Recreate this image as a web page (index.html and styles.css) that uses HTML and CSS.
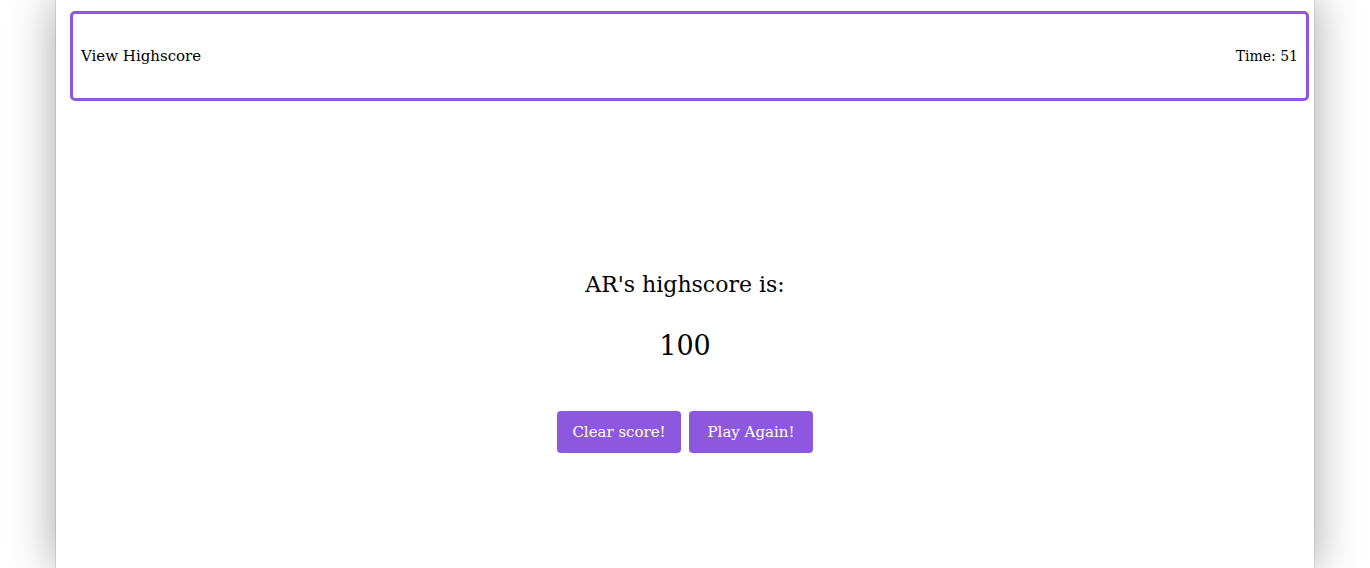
FILE: index.html
```html
<!DOCTYPE html>
<html>
<head>
<meta charset="utf-8">
<link rel="stylesheet" href="styles.css">
</head>
<body>
<div class="page">
  <header class="topbar">
    <span class="link">View Highscore</span>
    <span class="timer">Time: 51</span>
  </header>
  <main class="result">
    <h2 class="title">AR's highscore is:</h2>
    <div class="score">100</div>
    <div class="actions">
      <button class="btn">Clear score!</button>
      <button class="btn">Play Again!</button>
    </div>
  </main>
</div>
</body>
</html>
```
FILE: styles.css
```css
html, body {
  margin: 0;
  padding: 0;
  background: #ffffff;
  height: 100%;
}
body {
  font-family: "DejaVu Serif", "Liberation Serif", serif;
  color: #000;
  overflow: hidden;
}
.page {
  width: 1258px;
  margin: 0 auto;
  min-height: 100vh;
  background: #fff;
  box-sizing: border-box;
  padding-top: 11px;
  box-shadow: 0 0 1px 0 rgba(0,0,0,0.5), 0 0 42px 2px rgba(0,0,0,0.33);
  display: flex;
  flex-direction: column;
}
.topbar {
  height: 90px;
  margin: 0 5px 0 14px;
  box-sizing: border-box;
  border: 3px solid #8e57e0;
  border-radius: 5px;
  padding: 0 8px;
  display: flex;
  align-items: center;
  justify-content: space-between;
  font-size: 15px;
}
.timer {
  font-size: 14px;
}
.result {
  display: flex;
  flex-direction: column;
  align-items: center;
  padding-top: 170px;
}
.title {
  margin: 0;
  font-size: 22px;
  font-weight: normal;
  line-height: 28px;
  color: #000;
}
.score {
  margin-top: 30px;
  font-size: 27px;
  line-height: 34px;
  color: #000;
}
.actions {
  margin-top: 48px;
  display: flex;
  gap: 8px;
}
.btn {
  width: 124px;
  height: 42px;
  border: none;
  border-radius: 4px;
  background: #8e57e0;
  color: #fff;
  font-family: "DejaVu Serif", "Liberation Serif", serif;
  font-size: 15px;
  padding: 0;
}
```
